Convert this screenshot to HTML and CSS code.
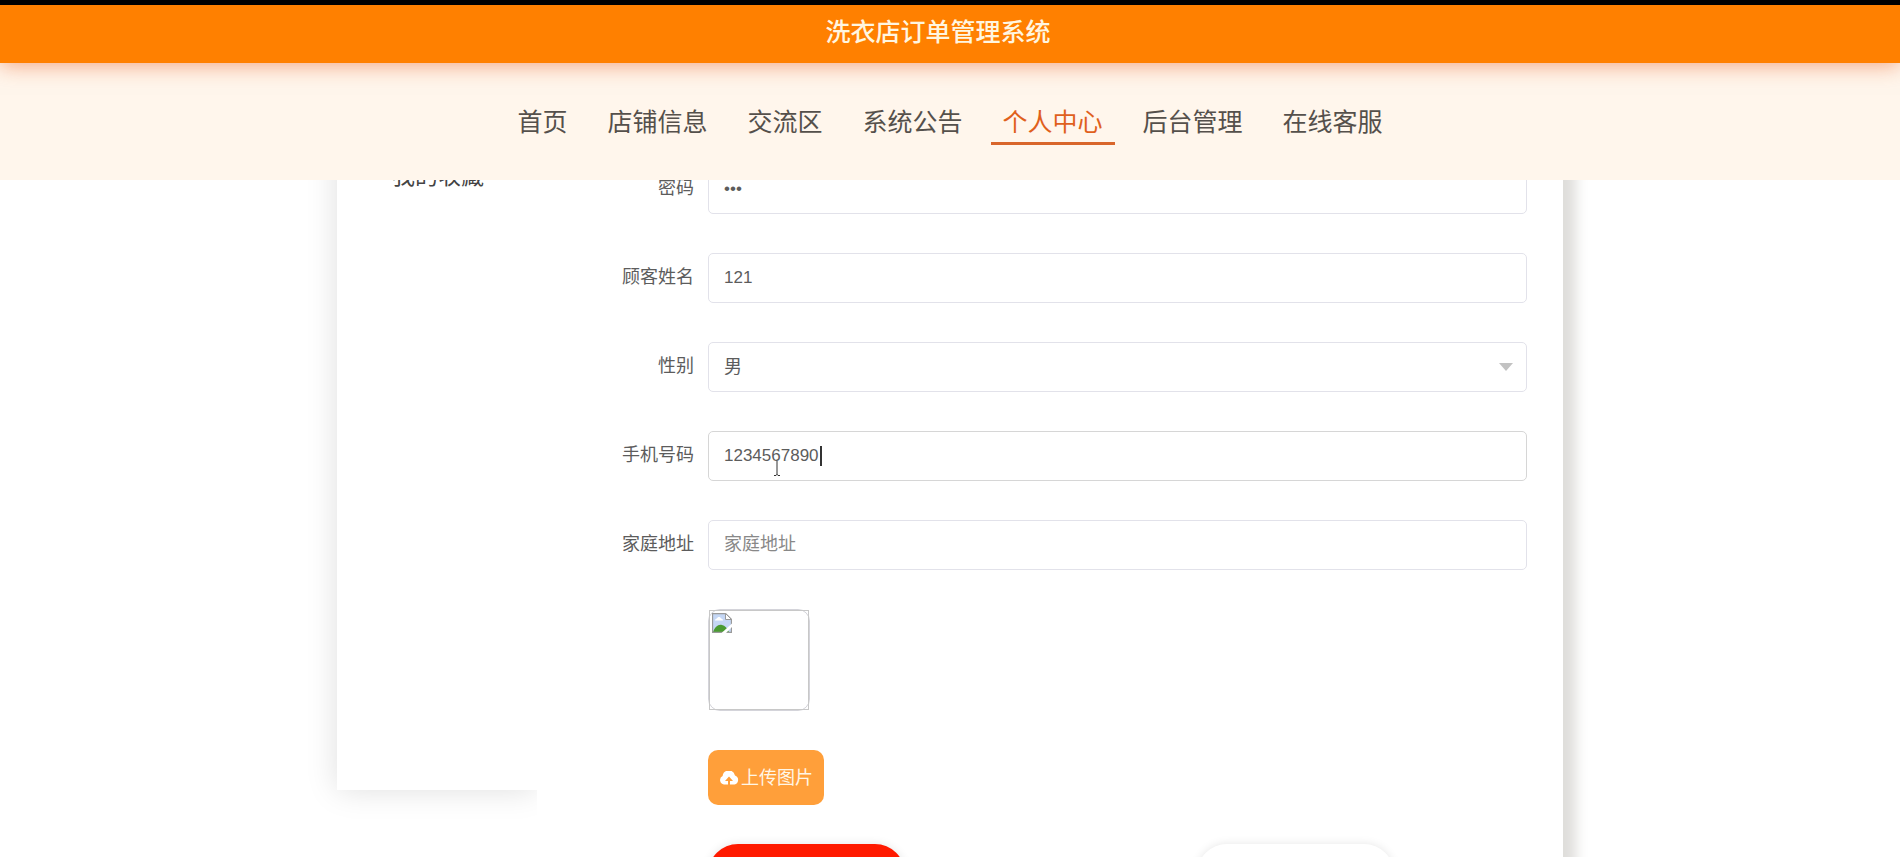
FILE: index.html
```html
<!DOCTYPE html>
<html lang="zh-CN">
<head>
<meta charset="utf-8">
<title>洗衣店订单管理系统</title>
<link rel="stylesheet" href="styles.css">
</head>
<body>
<header class="header">
  <div class="banner"><h1 class="title">洗衣店订单管理系统</h1></div>
  <nav class="nav">
    <a class="nav-link" href="#home">首页</a>
    <a class="nav-link" href="#shops">店铺信息</a>
    <a class="nav-link" href="#forum">交流区</a>
    <a class="nav-link" href="#news">系统公告</a>
    <a class="nav-link active" href="#me">个人中心</a>
    <a class="nav-link" href="#admin">后台管理</a>
    <a class="nav-link" href="#service">在线客服</a>
  </nav>
</header>
<main class="page">
  <div class="center">
    <aside class="sidebar"><a class="side-link" href="#favorites">我的收藏</a></aside>
    <form class="panel">
      <div class="row">
        <label class="label" for="pwd">密码</label>
        <div class="control"><input class="field" id="pwd" type="password" value="121"></div>
      </div>
      <div class="row">
        <label class="label" for="name">顾客姓名</label>
        <div class="control"><input class="field" id="name" type="text" value="121"></div>
      </div>
      <div class="row">
        <label class="label" for="sex">性别</label>
        <div class="control">
          <select class="field select" id="sex"><option>男</option><option>女</option></select>
          <svg class="arrow" viewBox="0 0 14 8" aria-hidden="true"><path d="M0 0h14L7 8z" fill="#c2c2c2"/></svg>
        </div>
      </div>
      <div class="row">
        <label class="label" for="phone">手机号码</label>
        <div class="control">
          <input class="field current" id="phone" type="text" value="1234567890">
          <span class="caret"></span>
          <svg class="pointer" viewBox="0 0 8 16" aria-hidden="true"><path d="M4 1v14M1 15.500h2l1-1 1 1h2" fill="none" stroke="#333"/></svg>
        </div>
      </div>
      <div class="row">
        <label class="label" for="address">家庭地址</label>
        <div class="control"><input class="field" id="address" type="text" placeholder="家庭地址"></div>
      </div>
      <div class="row">
        <span class="label"></span>
        <div class="photo">
          <div class="photo-inner">
            <svg class="broken" viewBox="0 0 20 20" aria-hidden="true">
              <path d="M.5.5h13l6 6v13H.5z" fill="#c5d7f5"/>
              <path d="M3 7.500c0-1.500 1.500-2 2-2 .5-2 3.500-2 4 0 1.500 0 2 1 2 2z" fill="#fff"/>
              <path d="M1 19c2-5 5-8 9-7 3 .5 5 3 7 7z" fill="#4a9b32"/>
              <path d="M.5.5h13l6 6v13H.5z" fill="none" stroke="#9a9a9a" stroke-width="1.300"/>
              <path d="M13.500.5v6h6z" fill="#fff" stroke="#9a9a9a"/>
              <path d="M9 20.500L20.500 10v3.500L13.500 20.500z" fill="#fff"/>
            </svg>
          </div>
        </div>
      </div>
      <div class="row">
        <span class="label"></span>
        <button class="upload" type="button">
          <svg class="cloud" viewBox="0 0 20 14" aria-hidden="true">
            <path d="M5 13.500A4.500 4.500 0 0 1 3.600 5 6.300 6.300 0 0 1 16 4.500 4.700 4.700 0 0 1 15.500 13.500z" fill="#fff"/>
            <path d="M10 5.500l4 4.500h-3v4H9v-4H6z" fill="#ff9f3a"/>
          </svg>
          <span class="upload-text">上传图片</span>
        </button>
      </div>
      <div class="row">
        <span class="label"></span>
        <div class="actions">
          <button class="pill primary" type="button" aria-label="更新信息"></button>
          <button class="pill" type="button" aria-label="退出登录"></button>
        </div>
      </div>
    </form>
  </div>
</main>
</body>
</html>
```
FILE: styles.css
```css
* { box-sizing: border-box; }

body {
  margin: 0;
  background: #fff;
  color: #5c5c5c;
  font-family: "Liberation Sans", "Noto Sans CJK SC", sans-serif;
  font-size: 18px;
}

button, input, select { font: inherit; color: inherit; }

.header {
  position: fixed;
  inset: 0 0 auto;
  z-index: 10;
  background: #fff6ec;
}

.banner {
  height: 63px;
  padding-right: 24px;
  border-top: 5px solid #000;
  background: #ff8000;
  box-shadow: 0 2px 20px rgba(234, 84, 20, 0.5);
}

.title {
  margin: 0;
  color: #fff6e0;
  font-size: 25px;
  font-weight: 500;
  line-height: 54px;
  text-align: center;
}

.nav {
  display: flex;
  justify-content: center;
  gap: 16px;
  padding: 40px 0 35px;
}

.nav-link {
  padding: 0 12px;
  border-bottom: 3px solid transparent;
  color: #55504b;
  font-size: 25px;
  line-height: 39px;
  text-decoration: none;
}

.nav-link.active {
  border-color: #d9662b;
  color: #e0601c;
}

.page {
  height: 100vh;
  overflow: hidden;
}

.center {
  display: flex;
  align-items: flex-start;
  max-width: 1226px;
  margin: 0 auto;
}

.sidebar {
  width: 200px;
  height: 790px;
  padding: 153px 55px 0;
  background: #fff;
  box-shadow: 0 0 30px rgba(0, 0, 0, 0.13);
}

.side-link {
  color: #444;
  font-size: 23px;
  line-height: 46px;
  text-decoration: none;
  white-space: nowrap;
}

.panel {
  position: relative;
  display: flex;
  flex: 1;
  flex-direction: column;
  gap: 39px;
  padding: 164px 36px 60px 0;
  background: #fff;
  box-shadow: 15px 0 12px -2px #dfdedb;
}

.row {
  display: flex;
  align-items: flex-start;
  gap: 14px;
}

.label {
  width: 157px;
  line-height: 48px;
  text-align: right;
}

.control {
  position: relative;
  flex: 1;
}

.field {
  display: block;
  width: 100%;
  height: 50px;
  padding: 0 15px;
  border: 1px solid #e2e2ea;
  border-radius: 5px;
  outline: none;
  background: #fff;
  font-size: 17px;
}

.field.current { border-color: #d6d6d6; }

.field::placeholder {
  color: #888;
  font-size: 18px;
}

.select {
  appearance: none;
  font-size: 18px;
}

.arrow {
  position: absolute;
  top: 21px;
  right: 14px;
  width: 14px;
  height: 8px;
}

.caret {
  position: absolute;
  top: 15px;
  left: 112px;
  width: 2px;
  height: 20px;
  background: #333;
}

.pointer {
  position: absolute;
  top: 29px;
  left: 65px;
  width: 8px;
  height: 16px;
}

.photo {
  width: 102px;
  height: 102px;
  border: 1px solid #d4d4da;
  border-radius: 12px;
}

.photo-inner {
  height: 100px;
  padding: 2px;
  border: 1px solid #c8c8c8;
}

.broken {
  display: block;
  width: 20px;
  height: 20px;
}

.upload {
  display: flex;
  align-items: center;
  gap: 2px;
  height: 55px;
  padding: 0 11px;
  border: 0;
  border-radius: 10px;
  background: #ff9f3a;
  color: #fff6e6;
}

.upload-text { padding-bottom: 4px; }

.cloud {
  width: 20px;
  height: 14px;
}

.actions {
  display: flex;
  gap: 292px;
}

.pill {
  width: 197px;
  height: 60px;
  border: 0;
  border-radius: 30px;
  background: #fff;
  box-shadow: 0 0 10px rgba(0, 0, 0, 0.1);
}

.primary { background: #ff1a00; }
```
